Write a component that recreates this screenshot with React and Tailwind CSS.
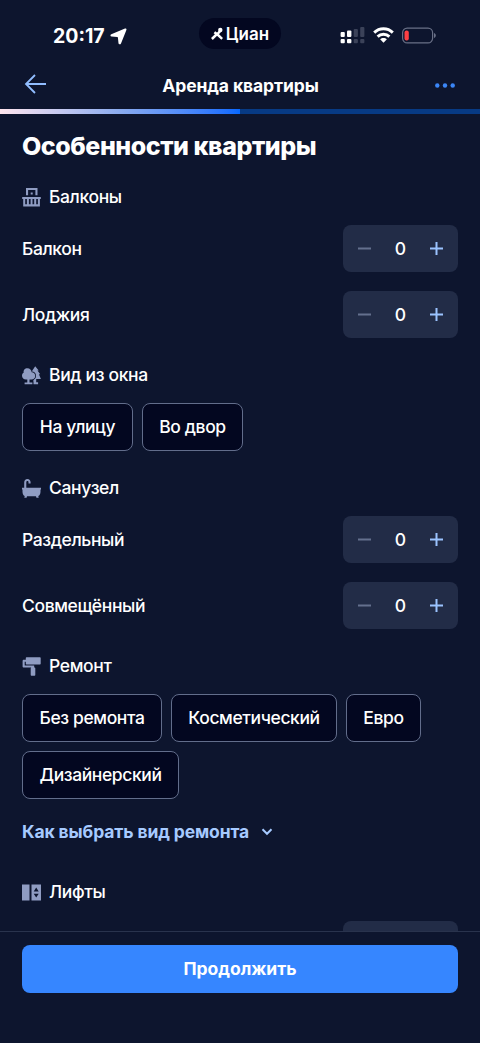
const iconProps = {
  width: 19,
  height: 19,
  viewBox: '0 0 19 19',
  fill: 'currentColor',
  className: 'shrink-0 text-[#8f9cc2]',
};

function BalconyIcon() {
  return (
    <svg {...iconProps}>
      <path fillRule="evenodd" d="M4 0h11.500v7.200h-2.100V2H6.100v5.200H4zM8.700 4.600h2v1.900h-2z" />
      <path fillRule="evenodd" d="M.2 9h18.600v2h-.9v7.500H1.200V11H.2zM3.200 11v5.300h1.700V11zm3.700 0v5.300h1.700V11zm3.600 0v5.300h1.700V11zm3.700 0v5.300h1.700V11z" />
    </svg>
  );
}

function TreesIcon() {
  return (
    <svg {...iconProps}>
      <path d="M13.200.2l3.500 4.300h-1.200l2.700 3.700h-1.300l2 4.900h-4.700v3.200h1.900v1.900h-4.700V13H9V5h1z" />
      {/* the leafy tree stands in front, its outline cuts a gap into the pine */}
      <path
        d="M5.400 2.300c2.400 0 4.200 1.700 4.300 4 2 .1 3.500 1.600 3.500 3.600s-1.600 3.600-3.600 3.600H7.500v3h2.900v1.700H2.600v-1.700h2.700v-3H4c-2.200 0-4-1.600-4-3.800 0-1.400.7-2.500 1.800-3.200-.8-2.100 1.100-4.200 3.600-4.200z"
        stroke="#0d152e"
        strokeWidth="1.600"
        paintOrder="stroke"
      />
    </svg>
  );
}

function BathIcon() {
  return (
    <svg {...iconProps}>
      <path d="M2.200 10V3.400C2.200 1.300 3.500 0 5.400 0s3.200 1.300 3.200 3.200v1.200H6.500V3.300c0-.8-.4-1.300-1.100-1.300s-1.100.5-1.100 1.500V10z" />
      <path d="M0 8.800h19v1.700h-.5v2.200c0 2.300-.9 3.700-2.200 4.300l.4 1.700h-2.300l-.4-1.400H5l-.4 1.400H2.300l.4-1.700C1.400 16.400.5 15 .5 12.700v-2.200H0z" />
    </svg>
  );
}

function RollerIcon() {
  return (
    <svg {...iconProps}>
      <path d="M4.800.3h12.900c.6 0 1 .4 1 1v5.200c0 .6-.4 1-1 1H4.800c-.6 0-1-.4-1-1V4.800H2.700v3.700h9.500v2h.1c.6 0 1 .4 1 1v6.200c0 .6-.4 1-1 1H9.700c-.6 0-1-.4-1-1v-6.200c0-.4.200-.7.500-.9H1.800c-.7 0-1.200-.5-1.200-1.200V4c0-.7.5-1.200 1.200-1.200h2V1.300c0-.6.4-1 1-1z" />
    </svg>
  );
}

function LiftIcon() {
  return (
    <svg {...iconProps}>
      <path fillRule="evenodd" d="M0 1.500h7.500v16H0zM9.500 1.500H19v16H9.500zM14.200 4.500L11.700 8.400h5zM11.700 10.700h5l-2.500 3.900z" />
    </svg>
  );
}

function StatusBar() {
  return (
    <div className="flex h-[63px] items-start">
      <div className="flex w-[199px] items-center gap-[5px] pt-[25px] pl-[53px]">
        <span className="w-[52px] text-[19.500px] leading-[22px] font-bold whitespace-nowrap">20:17</span>
        <svg width="17" height="17" viewBox="0 0 17 17" fill="white">
          <path d="M15 .5c1-.4 1.800.4 1.400 1.400L11 15.500c-.5 1.300-2.300 1.100-2.500-.3L7.900 9.600c0-.4-.2-.6-.6-.6L1.600 8.500C.2 8.300 0 6.700 1.300 6.200z" />
        </svg>
      </div>
      <div className="mt-[18px] flex h-[31px] w-[82px] items-center justify-center gap-[3px] rounded-full bg-[#030720]">
        <svg width="12" height="14" viewBox="0 0 12 14" fill="none" stroke="white" strokeWidth="2.500">
          <path d="M.9 12L6 7l5.200 4.900M3.400 5.200L6.100 7.300 8.900 4.300" />
          <circle cx="9.300" cy="3" r="2.200" fill="white" stroke="none" />
        </svg>
        <span className="text-[17px] leading-5 font-semibold">Циан</span>
      </div>
      <div className="flex items-center gap-2 pt-[26px] pl-[59px]">
        <svg width="25" height="18" viewBox="0 0 25 18" fill="white">
          <rect x=".6" y="6" width="4.200" height="5" rx="1" />
          <rect x="7" y="4.600" width="4.400" height="6.400" rx="1" />
          <rect x=".6" y="13" width="4.200" height="4.200" rx="1" />
          <rect x="7" y="13" width="4.400" height="4.200" rx="1" />
          <g fill="#3b4259">
            <rect x="13.700" y="3" width="4.200" height="8" rx="1" />
            <rect x="20.200" y="1" width="4.200" height="10" rx="1" />
            <rect x="13.700" y="13" width="4.200" height="4.200" rx="1" />
            <rect x="20.200" y="13" width="4.200" height="4.200" rx="1" />
          </g>
        </svg>
        <svg width="21" height="16" viewBox="0 0 21 16" fill="none" stroke="white" strokeWidth="2.900">
          <path d="M1.200 5.600c5.200-5.100 13.400-5.100 18.600 0" />
          <path d="M4.600 9.600c3.300-3.200 8.500-3.200 11.800 0" />
          <path d="M10.500 15.800l-3.400-3.500c1.900-1.800 4.900-1.800 6.800 0z" fill="white" stroke="none" />
        </svg>
        <svg width="35" height="17" viewBox="0 0 35 17" fill="none" className="-ml-px">
          <rect x="1.600" y="1.100" width="30" height="14.800" rx="4.600" stroke="#697087" strokeWidth="1.200" />
          <rect x="3.500" y="3.600" width="4.300" height="9.800" rx="2" fill="#ff3f43" />
          <path d="M33 6c1.200.4 1.800 1.300 1.800 2.500s-.6 2.100-1.800 2.500z" fill="#697087" />
        </svg>
      </div>
    </div>
  );
}

function Header() {
  return (
    <header>
      <div className="flex h-[46px] items-center px-6">
        <svg width="22" height="20" viewBox="0 0 22 20" fill="none" stroke="#91bdff" strokeWidth="1.800" className="-mt-1">
          <path d="M22 10H2M11 1L2 10l9 9" />
        </svg>
        <h1 className="flex-1 text-center text-[17.500px] leading-6 font-bold tracking-[-0.1px]">Аренда квартиры</h1>
        <svg width="20" height="5" viewBox="0 0 20 5" fill="#3b86f7" className="mr-px -mt-0.5">
          <circle cx="2.300" cy="2.500" r="2.200" />
          <circle cx="10" cy="2.500" r="2.200" />
          <circle cx="17.700" cy="2.500" r="2.200" />
        </svg>
      </div>
      <div className="h-[5px] bg-[#073a84]">
        <div className="h-full w-1/2 bg-linear-to-r from-[#ffe5ee] via-[#8aabef] to-[#0468ff]" />
      </div>
    </header>
  );
}

function SectionTitle({ icon, children }) {
  return (
    <div className="flex h-6 items-center gap-2">
      {icon}
      <h3 className="text-[17.500px] leading-6 font-medium tracking-[-0.35px]">{children}</h3>
    </div>
  );
}

function Stepper() {
  return (
    <div className="flex h-[47px] w-[115px] items-center justify-between rounded-lg bg-[#222c47] px-[15px]">
      <button aria-label="Меньше">
        <svg width="13" height="13" viewBox="0 0 13 13" stroke="#64708e" strokeWidth="2">
          <path d="M0 6.500h13" />
        </svg>
      </button>
      <span className="text-[17.500px] leading-6 font-medium">0</span>
      <button aria-label="Больше">
        <svg width="13" height="13" viewBox="0 0 13 13" stroke="#9bc3ff" strokeWidth="2">
          <path d="M0 6.500h13M6.500 0v13" />
        </svg>
      </button>
    </div>
  );
}

function CounterRow({ label }) {
  return (
    <div className="flex h-[47px] items-center justify-between">
      <span className="text-[17.500px] leading-6 font-medium tracking-[-0.38px]">{label}</span>
      <Stepper />
    </div>
  );
}

function Chip({ className, children }) {
  return (
    <button className={`h-12 shrink-0 rounded-lg border border-[#626d8b] bg-[#030720] text-[17.500px] font-medium tracking-[-0.4px] whitespace-nowrap ${className}`}>
      {children}
    </button>
  );
}

export default function App() {
  return (
    <div className="flex h-[1043px] w-[480px] flex-col overflow-hidden bg-[#0d152e] font-['Inter','Liberation_Sans',sans-serif] text-white">
      <StatusBar />
      <Header />

      <main className="min-h-0 flex-1 overflow-hidden px-[22px] pt-4">
        <h2 className="mb-[23px] text-[25px] leading-8 font-extrabold tracking-[-0.45px]">Особенности квартиры</h2>

        <div className="flex flex-col gap-[25px]">
          <section>
            <SectionTitle icon={<BalconyIcon />}>Балконы</SectionTitle>
            <div className="mt-4 flex flex-col gap-[19px]">
              <CounterRow label="Балкон" />
              <CounterRow label="Лоджия" />
            </div>
          </section>

          <section>
            <SectionTitle icon={<TreesIcon />}>Вид из окна</SectionTitle>
            <div className="mt-4 flex gap-[9px]">
              <Chip className="w-[111px]">На улицу</Chip>
              <Chip className="w-[101px]">Во двор</Chip>
            </div>
          </section>

          <section>
            <SectionTitle icon={<BathIcon />}>Санузел</SectionTitle>
            <div className="mt-4 flex flex-col gap-[19px]">
              <CounterRow label="Раздельный" />
              <CounterRow label="Совмещённый" />
            </div>
          </section>

          <section>
            <SectionTitle icon={<RollerIcon />}>Ремонт</SectionTitle>
            <div className="mt-4 flex flex-wrap gap-[9px]">
              <Chip className="w-[140px]">Без ремонта</Chip>
              <Chip className="w-[166px]">Косметический</Chip>
              <Chip className="w-[75px]">Евро</Chip>
              <Chip className="w-[157px]">Дизайнерский</Chip>
            </div>
            <button className="mt-[21px] flex h-6 items-center gap-3 text-[17.500px] leading-6 font-bold tracking-[-0.12px] text-[#a6caff]">
              Как выбрать вид ремонта
              <svg width="12" height="8" viewBox="0 0 12 8" fill="none" stroke="currentColor" strokeWidth="2">
                <path d="M1.500 1.300L6 5.800l4.500-4.500" />
              </svg>
            </button>
          </section>

          <section className="mt-[11px]">
            <SectionTitle icon={<LiftIcon />}>Лифты</SectionTitle>
            {/* only the top of the next stepper peeks out above the footer */}
            <div className="mt-[17px] ml-auto h-[47px] w-[115px] rounded-lg bg-[#222c47]" />
          </section>
        </div>
      </main>

      <footer className="h-[112px] shrink-0 border-t border-[#29334d] bg-[#0d152e] px-[22px] pt-[13px]">
        <button className="h-12 w-full rounded-lg bg-[#3686ff] text-[17.500px] font-bold">Продолжить</button>
      </footer>
    </div>
  );
}
